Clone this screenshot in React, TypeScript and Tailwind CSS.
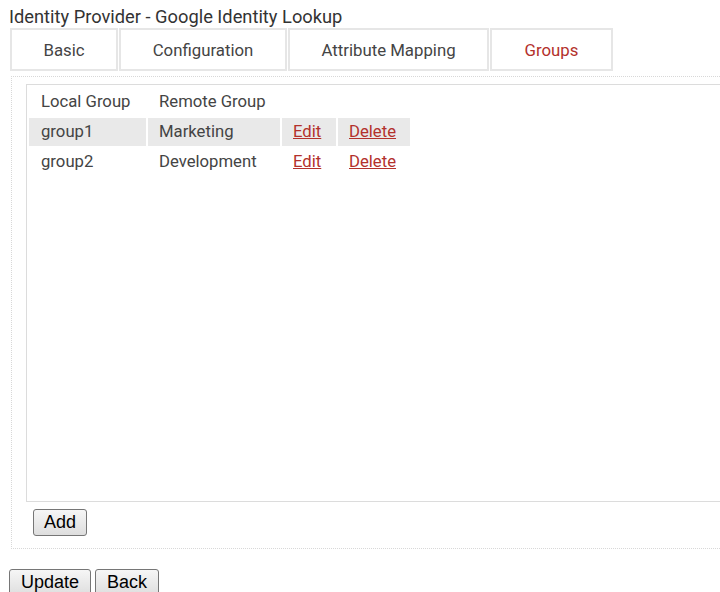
import React from 'react'

const tabs = [
  { label: 'Basic', width: 'w-[108px]' },
  { label: 'Configuration', width: 'w-[168px]' },
  { label: 'Attribute Mapping', width: 'w-[201px]' },
  { label: 'Groups', width: 'w-[123px]', active: true },
]

const groups = [
  { local: 'group1', remote: 'Marketing', shaded: true },
  { local: 'group2', remote: 'Development', shaded: false },
]

const btn =
  'rounded-[3px] border border-[#767676] bg-gradient-to-b from-[#f6f6f6] to-[#dedede] text-[18px] leading-[25px] text-black'

export default function App() {
  return (
    <div className="h-[592px] w-[720px] overflow-hidden bg-white font-['Roboto',sans-serif] text-[#333]">
      <div className="w-[820px] pl-[9px]">
        <h1 className="pt-[5px] text-[18.3px] leading-[23px] text-[#333]">
          Identity Provider - Google Identity Lookup
        </h1>

        <div className="flex gap-px pl-px">
          {tabs.map((t) => (
            <div
              key={t.label}
              className={`${t.width} flex h-[43px] items-center justify-center border-2 border-[#e6e6e6] pt-[2px] text-[16.8px] ${
                t.active ? 'text-[#b3312c]' : 'text-[#444]'
              }`}
            >
              {t.label}
            </div>
          ))}
        </div>

        <div className="mt-[5px] ml-[2px] border border-dotted border-[#d8d8d8] pt-[7px] pr-0 pb-[12px] pl-[14px]">
          <div className="h-[418px] border border-r-0 border-[#dcdcdc]">
            <table className="border-separate border-spacing-x-[2px] border-spacing-y-[2px] text-[16.7px] text-[#444]">
              <thead>
                <tr className="h-[29px]">
                  <th className="w-[117px] pl-[12px] text-left font-normal">Local Group</th>
                  <th className="w-[132px] pl-[11px] text-left font-normal">Remote Group</th>
                  <th className="w-[54px]" />
                  <th className="w-[72px]" />
                </tr>
              </thead>
              <tbody>
                {groups.map((g) => {
                  const cell = `h-[28px] pl-[11px] ${g.shaded ? 'bg-[#e9e9e9]' : ''}`
                  return (
                    <tr key={g.local}>
                      <td className={`${cell} pl-[12px]`}>{g.local}</td>
                      <td className={cell}>{g.remote}</td>
                      <td className={cell}>
                        <a href="#" className="text-[#b3312c] underline">Edit</a>
                      </td>
                      <td className={cell}>
                        <a href="#" className="text-[#b3312c] underline">Delete</a>
                      </td>
                    </tr>
                  )
                })}
              </tbody>
            </table>
          </div>
          <button className={`${btn} mt-[7px] ml-[7px] px-[10px] font-['Liberation_Sans',sans-serif]`}>Add</button>
        </div>

        <div className="mt-[20px] flex gap-[4px] font-['Liberation_Sans',sans-serif]">
          <button className={`${btn} px-[11px]`}>Update</button>
          <button className={`${btn} px-[11px]`}>Back</button>
        </div>
      </div>
    </div>
  )
}
